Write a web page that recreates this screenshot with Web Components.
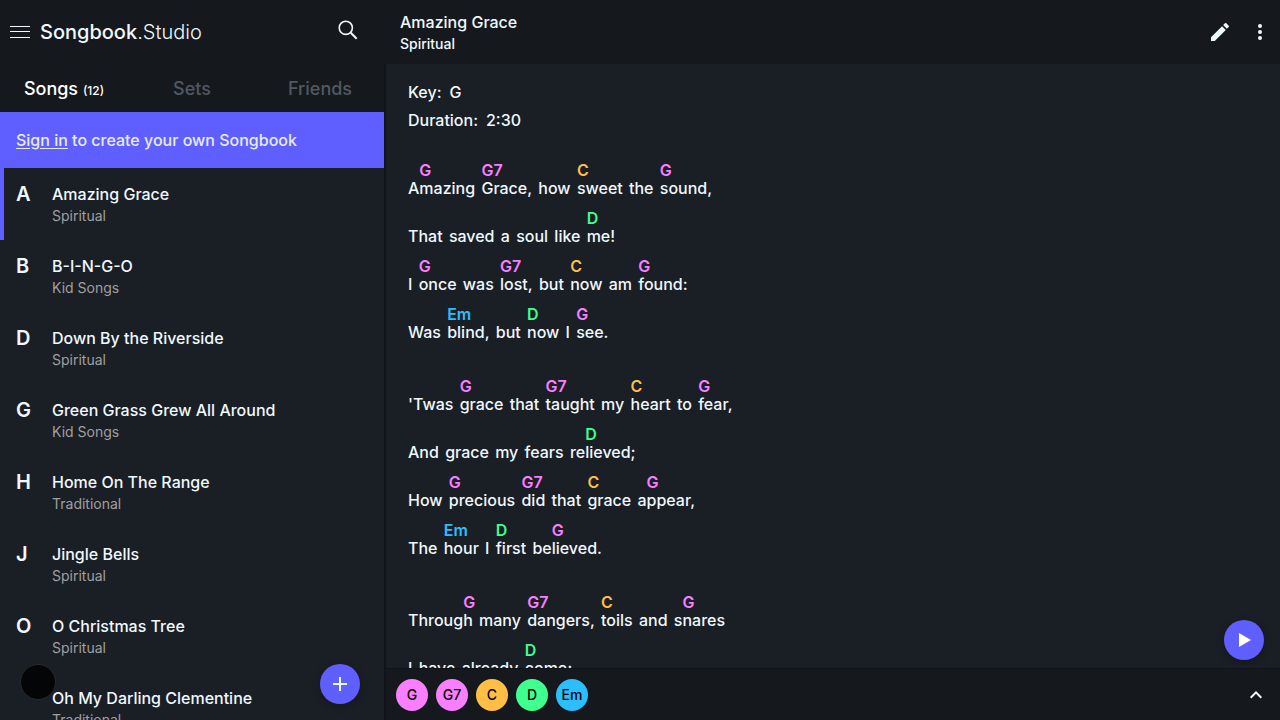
<!DOCTYPE html>
<html lang="en">
<head>
<meta charset="utf-8">
<meta name="viewport" content="width=device-width, initial-scale=1">
<title>Amazing Grace - Songbook.Studio</title>
<style>
  body {
    margin: 0;
    background: #1a1e25;
    color: #f0f8ff;
    font: 500 16px/24px Inter, "Liberation Sans", sans-serif;
    --bar: #15191d;
    --accent: #5f5fff;
    --edge: #101317;
    --G: #f97fff;
    --G7: #f97fff;
    --C: #ffbf47;
    --D: #3fff8f;
    --Em: #2bbfff;
  }
</style>
</head>
<body>
<songbook-app></songbook-app>

<script>
const define = (name, html, setup) => {
  const template = document.createElement('template');
  template.innerHTML = html;
  customElements.define(name, class extends HTMLElement {
    constructor() {
      super();
      this.attachShadow({ mode: 'open' }).append(template.content.cloneNode(true));
    }
    connectedCallback() {
      if (setup) setup(this, this.shadowRoot);
    }
  });
};

/* Square button that holds one icon */
define('icon-button', `
  <style>
    :host { display: block; }
    button { display: grid; place-items: center; width: 40px; height: 40px; padding: 0; border: 0; background: none; color: inherit; cursor: pointer; }
  </style>
  <button type="button"><slot></slot></button>`,
  (el, root) => root.querySelector('button').setAttribute('aria-label', el.getAttribute('label')));

/* Floating round action button */
define('fab-button', `
  <style>
    :host { display: block; }
    button { display: grid; place-items: center; width: 40px; height: 40px; padding: 0; border: 0; border-radius: 50%; background: var(--accent); color: #f0f8ff; box-shadow: 0 2px 8px rgba(0,0,0,.2); cursor: pointer; }
  </style>
  <button type="button"><slot></slot></button>`,
  (el, root) => root.querySelector('button').setAttribute('aria-label', el.getAttribute('label')));

define('app-header', `
  <style>
    :host { display: flex; align-items: center; height: 64px; }
    h1 { flex: 1; margin: 0; font-size: 20px; line-height: 24px; font-weight: 500; }
    h1 span { font-weight: 300; }
    .search { margin-right: 16px; padding-bottom: 4px; }
    svg { display: block; }
  </style>
  <icon-button label="Menu"><svg width="20" height="12" fill="currentColor"><path d="M0 0h20v1H0zM0 5h20v1H0zM0 11h20v1H0z"/></svg></icon-button>
  <h1>Songbook<span>.Studio</span></h1>
  <icon-button class="search" label="Search"><svg width="20" height="20" fill="none" stroke="currentColor" stroke-width="1.6"><circle cx="7.8" cy="7.8" r="6.6"/><path d="M12.5 12.5l6.2 6.2" stroke-width="2"/></svg></icon-button>`);

define('nav-tabs', `
  <style>
    :host { display: grid; grid-template-columns: repeat(3, 1fr); height: 48px; }
    button { padding: 2px 0 0; border: 0; background: none; font: 500 18px/24px Inter, sans-serif; color: #525862; cursor: pointer; }
    button[aria-selected=true] { color: #fff; }
    small { font-size: 12px; line-height: 12px; }
  </style>
  <button type="button" role="tab" aria-selected="true">Songs <small>(12)</small></button>
  <button type="button" role="tab" aria-selected="false">Sets</button>
  <button type="button" role="tab" aria-selected="false">Friends</button>`);

define('signin-banner', `
  <style>
    :host { display: block; padding: 16px; background: var(--accent); color: #e8ebff; }
    a { color: inherit; text-underline-offset: 2px; }
  </style>
  <a href="#signin">Sign in</a> to create your own Songbook`);

define('song-row', `
  <style>
    :host { display: flex; box-sizing: border-box; height: 72px; padding: 14px 16px 14px 12px; border-left: 4px solid transparent; }
    :host([selected]) { border-color: var(--accent); }
    b { width: 36px; flex: none; font-size: 20px; font-weight: 600; }
    small { display: block; font-size: 14px; line-height: 20px; font-weight: 400; color: #a0a0a0; }
  </style>
  <b></b><div><slot></slot><small></small></div>`,
  (el, root) => {
    root.querySelector('b').textContent = el.getAttribute('letter') || '';
    root.querySelector('small').textContent = el.getAttribute('category');
  });

define('song-sidebar', `
  <style>
    :host { position: relative; display: flex; flex-direction: column; min-height: 0; overflow: hidden; }
    .top { flex: none; background: var(--bar); }
    .list { flex: 1; min-height: 0; overflow: hidden; }
    .add { position: absolute; right: 24px; bottom: 16px; }
    .dot { position: absolute; left: 20px; bottom: 20px; box-sizing: border-box; width: 36px; height: 36px; border: 1px solid #292929; border-radius: 50%; background: #040506; }
  </style>
  <div class="top"><app-header></app-header><nav-tabs role="tablist"></nav-tabs></div>
  <signin-banner></signin-banner>
  <div class="list">
    <song-row selected letter="A" category="Spiritual">Amazing Grace</song-row>
    <song-row letter="B" category="Kid Songs">B-I-N-G-O</song-row>
    <song-row letter="D" category="Spiritual">Down By the Riverside</song-row>
    <song-row letter="G" category="Kid Songs">Green Grass Grew All Around</song-row>
    <song-row letter="H" category="Traditional">Home On The Range</song-row>
    <song-row letter="J" category="Spiritual">Jingle Bells</song-row>
    <song-row letter="O" category="Spiritual">O Christmas Tree</song-row>
    <song-row category="Traditional">Oh My Darling Clementine</song-row>
  </div>
  <div class="dot"></div>
  <fab-button class="add" label="Add song"><svg width="14" height="14" stroke="currentColor" stroke-width="2"><path d="M7 0v14M0 7h14"/></svg></fab-button>`);

define('song-header', `
  <style>
    :host { display: flex; align-items: center; height: 64px; padding-left: 16px; background: var(--bar); }
    div { flex: 1; }
    h2 { margin: 0; font-size: 16px; line-height: 24px; font-weight: 500; }
    p { margin: 0; font-size: 14px; line-height: 20px; }
    svg { display: block; }
  </style>
  <div><h2>Amazing Grace</h2><p>Spiritual</p></div>
  <icon-button label="Edit"><svg width="24" height="24" viewBox="0 0 24 24" fill="currentColor"><path d="M3 17.25V21h3.75L17.81 9.94l-3.75-3.75zM20.71 7.04a1 1 0 0 0 0-1.41l-2.34-2.34a1 1 0 0 0-1.41 0l-1.83 1.83 3.75 3.75z"/></svg></icon-button>
  <icon-button label="More"><svg width="4" height="16" fill="currentColor"><circle cx="2" cy="2" r="2"/><circle cx="2" cy="8" r="2"/><circle cx="2" cy="14" r="2"/></svg></icon-button>`);

/* Chord name floating above the syllable that follows it; no white space, so it takes no width */
define('chord-mark',
  '<style>:host { position: relative; } span { position: absolute; left: 0; top: -20px; line-height: 24px; font-weight: 600; }</style><span></span>',
  (el, root) => {
    const span = root.querySelector('span');
    span.textContent = el.getAttribute('name');
    span.style.color = `var(--${el.getAttribute('name')})`;
  });

/* Verse written in ChordPro notation, one lyric line per text line */
define('song-verse', `
  <style>
    :host { display: block; margin-bottom: 24px; }
    p { margin: 0; padding-top: 24px; line-height: 24px; }
    .word { margin-right: 2px; }
  </style>`,
  (el, root) => {
    for (const line of el.textContent.trim().split('\n')) {
      const p = document.createElement('p');
      p.innerHTML = line.trim().split(' ').map(word =>
        `<span class="word">${word.replace(/\[(\w+)\]/g, '<chord-mark name="$1"></chord-mark>')}</span>`).join(' ');
      root.append(p);
    }
  });

define('song-sheet', `
  <style>
    :host { position: relative; flex: 1; min-height: 0; display: flex; flex-direction: column; }
    .scroll { flex: 1; min-height: 0; overflow: hidden; padding: 14px 22px 0; }
    dl { display: grid; grid-template-columns: max-content 1fr; grid-auto-rows: 28px; margin: 0 0 18px; line-height: 28px; }
    dl div { display: flex; gap: 8px; grid-column: 1 / -1; }
    dd { margin: 0; }
    fab-button { position: absolute; right: 16px; bottom: 8px; color: #fff; }
  </style>
  <div class="scroll">
    <dl><div><dt>Key:</dt><dd>G</dd></div><div><dt>Duration:</dt><dd>2:30</dd></div></dl>
    <song-verse>
      A[G]mazing [G7]Grace, how [C]sweet the [G]sound,
      That saved a soul like [D]me!
      I [G]once was [G7]lost, but [C]now am [G]found:
      Was [Em]blind, but [D]now I [G]see.
    </song-verse>
    <song-verse>
      'Twas [G]grace that [G7]taught my [C]heart to [G]fear,
      And grace my fears re[D]lieved;
      How [G]precious [G7]did that [C]grace a[G]ppear,
      The [Em]hour I [D]first be[G]lieved.
    </song-verse>
    <song-verse>
      Throug[G]h many [G7]dangers, [C]toils and s[G]nares
      I have already [D]come;
    </song-verse>
  </div>
  <fab-button label="Play"><svg width="14" height="14" fill="#fff"><path d="M2 0l12 7-12 7z"/></svg></fab-button>`);

define('chord-chip', `
  <style>
    :host { display: block; }
    button { width: 32px; height: 32px; padding: 0; border: 0; border-radius: 50%; font: 500 14px/32px Inter, sans-serif; color: #000; cursor: pointer; }
  </style>
  <button type="button"></button>`,
  (el, root) => {
    const button = root.querySelector('button');
    button.textContent = el.getAttribute('name');
    button.style.background = `var(--${el.getAttribute('name')})`;
  });

define('chord-bar', `
  <style>
    :host { display: flex; align-items: center; gap: 8px; flex: none; height: 51px; padding: 0 4px 0 10px; border-top: 1px solid var(--edge); background: var(--bar); }
    .more { margin-left: auto; }
  </style>
  <chord-chip name="G"></chord-chip>
  <chord-chip name="G7"></chord-chip>
  <chord-chip name="C"></chord-chip>
  <chord-chip name="D"></chord-chip>
  <chord-chip name="Em"></chord-chip>
  <icon-button class="more" label="Show chords"><svg width="12" height="8" fill="none" stroke="currentColor" stroke-width="2"><path d="M.7 6.7L6 1.4l5.3 5.3"/></svg></icon-button>`);

define('songbook-app', `
  <style>
    :host { display: grid; grid-template-columns: 30% 1fr; grid-template-rows: 100vh; }
    main { display: flex; flex-direction: column; min-width: 0; min-height: 0; }
    .body { flex: 1; min-height: 0; display: flex; flex-direction: column; border-left: 2px solid var(--edge); }
  </style>
  <song-sidebar></song-sidebar>
  <main>
    <song-header></song-header>
    <div class="body"><song-sheet></song-sheet><chord-bar></chord-bar></div>
  </main>`);
</script>
</body>
</html>
